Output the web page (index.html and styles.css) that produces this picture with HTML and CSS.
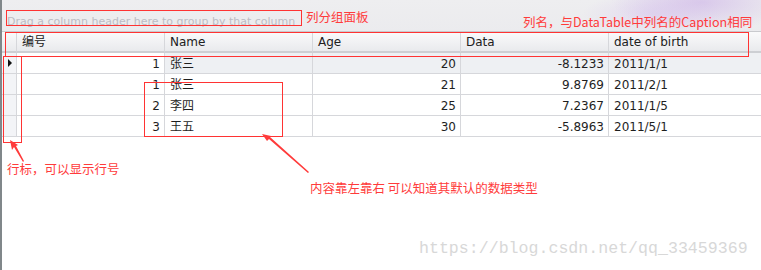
FILE: index.html
```html
<!DOCTYPE html>
<html lang="zh-CN">
<head>
    <meta charset="UTF-8">
    <title>GridControl</title>
    <link rel="stylesheet" href="styles.css">
</head>
<body>

    <div class="window">
        <div class="group-panel">
            <span class="group-hint">Drag a column header here to group by that column</span>
        </div>

        <div class="grid">
            <!-- header -->
            <div class="cell head indicator"></div>
            <div class="cell head">编号</div>
            <div class="cell head">Name</div>
            <div class="cell head">Age</div>
            <div class="cell head">Data</div>
            <div class="cell head last">date of birth</div>

            <!-- rows -->
            <div class="cell indicator"><span class="arrow-mark"></span></div>
            <div class="cell num focused">1</div>
            <div class="cell sel">张三</div>
            <div class="cell num sel">20</div>
            <div class="cell num sel">-8.1233</div>
            <div class="cell sel last">2011/1/1</div>

            <div class="cell indicator"></div>
            <div class="cell num">1</div>
            <div class="cell">张三</div>
            <div class="cell num">21</div>
            <div class="cell num">9.8769</div>
            <div class="cell last">2011/2/1</div>

            <div class="cell indicator"></div>
            <div class="cell num">2</div>
            <div class="cell">李四</div>
            <div class="cell num">25</div>
            <div class="cell num">7.2367</div>
            <div class="cell last">2011/1/5</div>

            <div class="cell indicator"></div>
            <div class="cell num">3</div>
            <div class="cell">王五</div>
            <div class="cell num">30</div>
            <div class="cell num">-5.8963</div>
            <div class="cell last">2011/5/1</div>
        </div>
    </div>

    <!-- Annotations -->
    <div class="box box-group"></div>
    <div class="box box-header"></div>
    <div class="box box-indicator"></div>
    <div class="box box-content"></div>

    <div class="note note-group">列分组面板</div>
    <div class="note note-header">列名，与DataTable中列名的Caption相同</div>
    <div class="note note-indicator">行标，可以显示行号</div>
    <div class="note note-content">内容靠左靠右 可以知道其默认的数据类型</div>

    <svg class="arrows" width="761" height="270" viewBox="0 0 761 270">
        <path d="M23 162 L14 147 L12 150 L10 140 L18 145 L16 146 L24 161 Z" fill="#ff3b3b"/>
        <path d="M308 173 L269 139 L267 141 L262 134 L271 136 L270 137 L309 172 Z" fill="#ff3b3b"/>
    </svg>

    <div class="watermark">https://blog.csdn.net/qq_33459369</div>

</body>
</html>
```

FILE: styles.css
```css
/* Page */
body {
    margin: 0;
    width: 761px;
    height: 270px;
    position: relative;
    overflow: hidden;
    background: #ffffff;
    font-family: "DejaVu Sans", "Noto Sans CJK SC", sans-serif;
}

/* Window frame */
.window {
    height: 270px;
    border-left: 2px solid #80878a;
    display: flex;
    flex-direction: column;
}

/* Group panel */
.group-panel {
    height: 32px;
    box-sizing: border-box;
    padding: 10px 0 0 5px;
    background:
        radial-gradient(ellipse 90px 30px at 700px 2px, rgba(200, 170, 230, 0.55), transparent),
        radial-gradient(ellipse 70px 22px at 650px 14px, rgba(215, 195, 240, 0.45), transparent),
        linear-gradient(to bottom, #eeeef0, #ebebee);
}
.group-hint {
    font-size: 11px;
    line-height: 15px;
    color: #bcbcc4;
}

/* Grid */
.grid {
    display: grid;
    grid-template-columns: 15px repeat(4, 148px) 1fr;
    grid-auto-rows: 21px;
    border-top: 1px solid #c9cace;
    margin-top: -1px;
}
.cell {
    box-sizing: border-box;
    border-right: 1px solid #d6d7db;
    border-bottom: 1px solid #d6d7db;
    padding: 0 5px;
    font-size: 12px;
    line-height: 22px;
    color: #1e1e1e;
    white-space: nowrap;
    overflow: hidden;
}
.cell.last {
    border-right: none;
}
.head {
    background: linear-gradient(to bottom, #fafafb, #e9eaed);
    border-bottom: 2px solid #cdcfd3;
    line-height: 21px;
    color: #202020;
}
.indicator {
    padding: 0;
    background: #f3f4f7;
}
.head.indicator {
    background: linear-gradient(to bottom, #fafafb, #e9eaed);
}
.num {
    text-align: right;
    padding-right: 4px;
}
.sel {
    background: #eef0f3;
}
.focused {
    background: #ffffff;
}
.arrow-mark {
    display: block;
    width: 0;
    height: 0;
    margin: 6px 0 0 6px;
    border-top: 4px solid transparent;
    border-bottom: 4px solid transparent;
    border-left: 4px solid #111111;
}

/* Red frames */
.box {
    position: absolute;
    border: 1px solid #ff3333;
}
.box-group { left: 6px; top: 10px; width: 294px; height: 14px; }
.box-header { left: 5px; top: 32px; width: 742px; height: 23px; }
.box-indicator { left: 3px; top: 56px; width: 17px; height: 85px; }
.box-content { left: 144px; top: 82px; width: 137px; height: 53px; }

/* Red notes */
.note {
    position: absolute;
    font-family: "Noto Sans CJK SC", sans-serif;
    font-size: 12.5px;
    line-height: 16px;
    color: #ff3b3b;
    white-space: nowrap;
}
.note-group { left: 306px; top: 9px; }
.note-header { left: 523px; top: 14px; }
.note-indicator { left: 7px; top: 161px; }
.note-content { left: 310px; top: 180px; }

.arrows {
    position: absolute;
    left: 0;
    top: 0;
}

/* Watermark */
.watermark {
    position: absolute;
    left: 419px;
    top: 239px;
    font-family: "Liberation Mono", monospace;
    font-size: 16.6px;
    color: #d8d8d8;
}
```
